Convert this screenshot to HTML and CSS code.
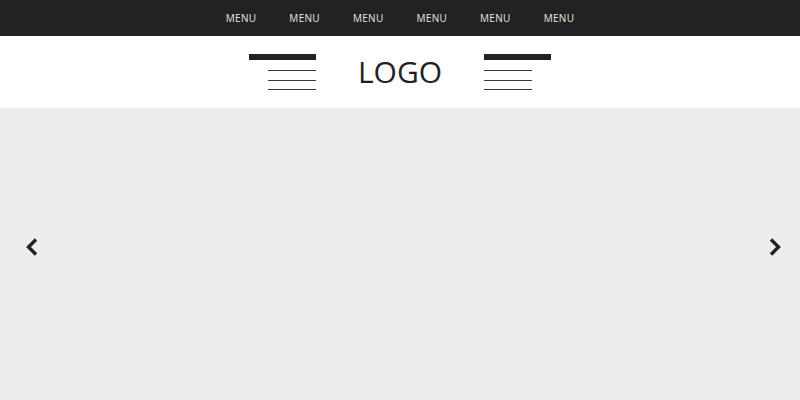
FILE: index.html
```html
<!DOCTYPE html>
<html>
<head>
<meta charset="utf-8">
<link rel="stylesheet" href="styles.css">
</head>
<body>
<nav class="topbar">
  <a class="menu-item">MENU</a>
  <a class="menu-item">MENU</a>
  <a class="menu-item">MENU</a>
  <a class="menu-item">MENU</a>
  <a class="menu-item">MENU</a>
  <a class="menu-item">MENU</a>
</nav>
<header class="header">
  <div class="deco deco-left">
    <span class="thick"></span>
    <span class="thin"></span>
    <span class="thin"></span>
    <span class="thin"></span>
  </div>
  <div class="logo">LOGO</div>
  <div class="deco deco-right">
    <span class="thick"></span>
    <span class="thin"></span>
    <span class="thin"></span>
    <span class="thin"></span>
  </div>
</header>
<main class="slider">
  <button class="arrow arrow-left" aria-label="Previous">
    <svg width="14" height="18" viewBox="0 0 14 18"><path d="M11 1.5 L3.5 9 L11 16.5" fill="none" stroke="#222" stroke-width="3.4"/></svg>
  </button>
  <button class="arrow arrow-right" aria-label="Next">
    <svg width="14" height="18" viewBox="0 0 14 18"><path d="M3 1.5 L10.5 9 L3 16.5" fill="none" stroke="#222" stroke-width="3.4"/></svg>
  </button>
</main>
</body>
</html>
```
FILE: styles.css
```css
html, body {
  margin: 0;
  padding: 0;
  height: 100%;
}
body {
  font-family: "Open Sans", "Liberation Sans", sans-serif;
  background: #ededed;
  display: flex;
  flex-direction: column;
}
.topbar {
  height: 36px;
  background: #222222;
  display: flex;
  justify-content: center;
  align-items: center;
  flex-shrink: 0;
}
.menu-item {
  color: #e6e6e6;
  font-size: 10px;
  letter-spacing: 0.3px;
  padding: 0 16.5px;
  line-height: 36px;
}
.header {
  height: 72px;
  background: #ffffff;
  display: flex;
  justify-content: center;
  align-items: flex-start;
  flex-shrink: 0;
}
.deco {
  width: 67px;
  display: flex;
  flex-direction: column;
  padding-top: 18px;
}
.deco-left {
  align-items: flex-end;
}
.deco-right {
  align-items: flex-start;
}
.thick {
  display: block;
  width: 67px;
  height: 6px;
  background: #222;
  margin-bottom: 10px;
}
.thin {
  display: block;
  width: 48px;
  height: 1px;
  background: #3a3a3a;
  margin-bottom: 8.5px;
}
.logo {
  width: 168px;
  text-align: center;
  font-size: 30px;
  color: #222;
  line-height: 72px;
}
.slider {
  flex: 1;
  background: #ededed;
  display: flex;
  justify-content: space-between;
  align-items: flex-start;
  padding: 130px 18px 0 25px;
}
.arrow {
  background: none;
  border: 0;
  padding: 0;
  width: 14px;
  height: 18px;
  display: block;
}
.arrow svg {
  display: block;
}
```
